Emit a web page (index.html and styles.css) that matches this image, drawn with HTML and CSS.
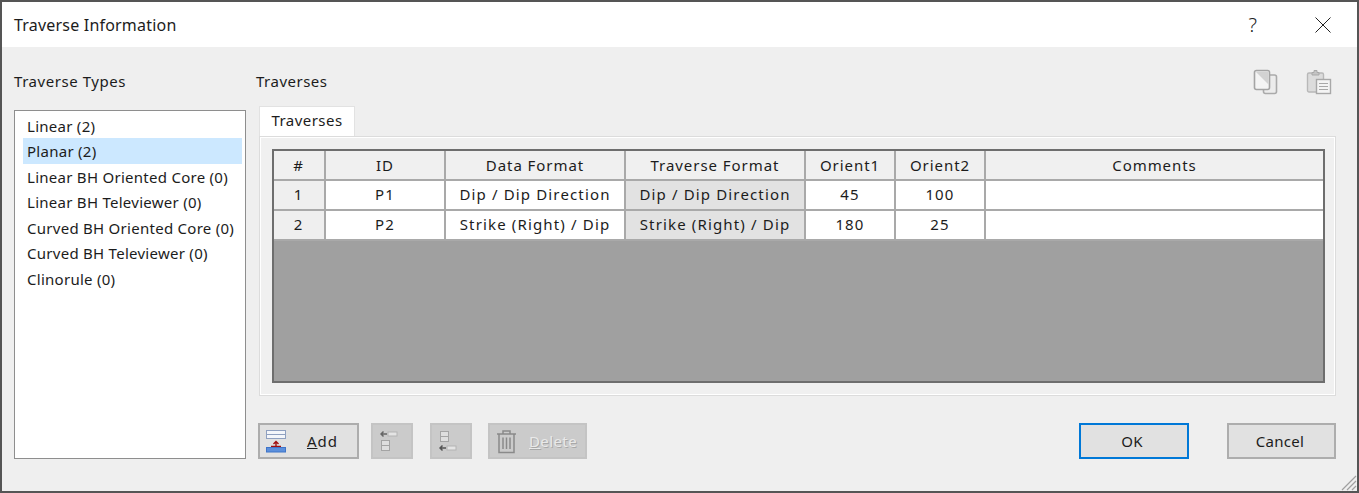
FILE: index.html
```html
<!DOCTYPE html>
<html lang="en">
<head>
<meta charset="utf-8">
<title>Traverse Information</title>
<link rel="stylesheet" href="styles.css">
</head>
<body>
<div class="window">
  <header class="titlebar">
    <span class="title">Traverse Information</span>
    <span class="help">?</span>
    <svg class="close" width="18" height="18" viewBox="0 0 18 18"><path d="M1.5 1.5 16.500 16.500M16.500 1.5 1.500 16.500" stroke="#222" stroke-width="1" fill="none"/></svg>
  </header>
  <main class="content">
    <section class="types">
      <h2 class="label types-label">Traverse Types</h2>
      <ul class="list">
        <li>Linear (2)</li>
        <li class="selected">Planar (2)</li>
        <li>Linear BH Oriented Core (0)</li>
        <li>Linear BH Televiewer (0)</li>
        <li>Curved BH Oriented Core (0)</li>
        <li>Curved BH Televiewer (0)</li>
        <li>Clinorule (0)</li>
      </ul>
    </section>
    <section class="traverses">
      <div class="head">
        <h2 class="label">Traverses</h2>
        <div class="tools">
          <svg width="25" height="26" viewBox="0 0 25 26" fill="none"><rect x="10.500" y="6" width="13" height="18.500" rx="2" fill="#ececec" stroke="#aaa" stroke-width="1.600"/><rect x="1.500" y="1.500" width="15" height="19" rx="2" fill="#f4f4f4" stroke="#a4a4a4" stroke-width="1.600"/><path d="M2.500 2.500H15.500V15.500Z" fill="#d2d2d2"/></svg>
          <svg width="26" height="26" viewBox="0 0 26 26" fill="none"><rect x="1.500" y="4" width="16" height="19" rx="1.500" fill="#dcdcdc" stroke="#b8b8b8" stroke-width="1.400"/><path d="M6 6V3.500H8V1.500H11V3.500H13V6Z" fill="#c4c4c4" stroke="#a8a8a8"/><rect x="10.500" y="10.500" width="14" height="14" fill="#f4f4f4" stroke="#a8a8a8" stroke-width="1.400"/><path d="M13 14.500H22M13 17.500H22M13 20.500H22" stroke="#a8a8a8" stroke-width="1.200"/></svg>
        </div>
      </div>
      <div class="tab">Traverses</div>
      <div class="pane">
        <table class="grid">
          <colgroup>
            <col class="c1"><col class="c2"><col class="c3"><col class="c4"><col class="c5"><col class="c6"><col class="c7">
          </colgroup>
          <thead>
            <tr><th>#</th><th>ID</th><th>Data Format</th><th>Traverse Format</th><th>Orient1</th><th>Orient2</th><th>Comments</th></tr>
          </thead>
          <tbody>
            <tr><td class="num">1</td><td>P1</td><td>Dip / Dip Direction</td><td class="ro">Dip / Dip Direction</td><td>45</td><td>100</td><td></td></tr>
            <tr><td class="num">2</td><td>P2</td><td>Strike (Right) / Dip</td><td class="ro">Strike (Right) / Dip</td><td>180</td><td>25</td><td></td></tr>
          </tbody>
        </table>
      </div>
      <div class="actions">
        <button class="btn add" type="button">
          <svg width="22" height="24" viewBox="0 0 22 24"><rect x="1.500" y="1.500" width="19" height="4" fill="#f4f6fa" stroke="#8fa0c0"/><rect x="1.500" y="5.500" width="19" height="4" fill="#f4f6fa" stroke="#8fa0c0"/><path d="M11 17V12.500M8.500 15 11 12.500 13.500 15M6 17.500H16" stroke="#a01010" stroke-width="1.400" fill="none"/><rect x="1.500" y="18.500" width="19" height="4.500" fill="#5b8fdc" stroke="#3f74c8"/></svg>
          <span class="btn-text"><u>A</u>dd</span>
        </button>
        <button class="btn off move" type="button">
          <svg class="move-icon" width="18" height="22" viewBox="0 0 18 22" fill="none"><path d="M7 4H1M3.500 1.500 1 4 3.500 6.500" stroke="#666" stroke-width="1.500"/><rect x="8" y="2" width="9" height="4" fill="#e4e4e4" stroke="#b4b4b4"/><rect x="1.500" y="10.500" width="8" height="5" fill="#dedede" stroke="#a4a4a4"/><rect x="1.500" y="15.500" width="8" height="5" fill="#dedede" stroke="#a4a4a4"/></svg>
        </button>
        <button class="btn off move" type="button">
          <svg class="move-icon" width="18" height="22" viewBox="0 0 18 22" fill="none"><rect x="1.500" y="1.500" width="8" height="5" fill="#dedede" stroke="#a4a4a4"/><rect x="1.500" y="6.500" width="8" height="5" fill="#dedede" stroke="#a4a4a4"/><path d="M7 18H1M3.500 15.500 1 18 3.500 20.500" stroke="#555" stroke-width="1.500"/><rect x="8" y="16" width="9" height="4" fill="#e4e4e4" stroke="#b4b4b4"/></svg>
        </button>
        <button class="btn off del" type="button">
          <svg width="21" height="25" viewBox="0 0 21 25" fill="none" stroke="#8a8a8a" stroke-width="1.500"><path d="M1 5H20M7 5V2H14V5M3 5V23.500H18V5M7 8.500V20M10.500 8.500V20M14 8.500V20"/></svg>
          <span class="btn-text"><u>D</u>elete</span>
        </button>
        <span class="spacer"></span>
        <button class="btn ok" type="button">OK</button>
        <button class="btn cancel" type="button">Cancel</button>
      </div>
    </section>
    <svg class="grip" width="18" height="18" viewBox="0 0 18 18" fill="none" stroke="#a0a0a0" stroke-width="1.200"><path d="M17 3 3 17M17 8 8 17M17 13 13 17"/></svg>
  </main>
</div>
</body>
</html>
```

FILE: styles.css
```css
* { box-sizing: border-box; }
html, body { margin: 0; height: 100%; }
body {
  font-family: "Noto Sans", "Open Sans", sans-serif;
  font-size: 15px;
  color: #1c1c1c;
  background: #efefef;
}
.window {
  height: 493px;
  border: 2px solid #555;
  display: flex;
  flex-direction: column;
  overflow: hidden;
}
.titlebar {
  height: 45px;
  background: #fff;
  display: flex;
  align-items: center;
  padding: 0 25px 0 12px;
  flex: none;
}
.title { flex: 1; font-size: 16px; letter-spacing: 0.2px; }
.help { font-size: 20px; margin-right: 57px; font-weight: 300; color: #222; }
.content {
  flex: 1;
  display: flex;
  gap: 12px;
  padding: 23px 21px 0 12px;
  background: #efefef;
  position: relative;
}
.types { width: 232px; flex: none; }
.label { margin: 0; font-size: 15px; font-weight: 400; line-height: 22px; letter-spacing: 0.55px; }
.traverses .label { margin-left: -2px; letter-spacing: 0.5px; }
.types-label { margin-bottom: 18px; }
.list {
  list-style: none;
  margin: 0;
  height: 349px;
  padding: 2px 3px 0 8px;
  background: #fff;
  border: 1px solid #8e8e8e;
}
.list li { height: 25.450px; line-height: 26px; padding-left: 4px; white-space: nowrap; letter-spacing: 0.27px; }
.list .selected { background: #cce8ff; }
.traverses { flex: 1; display: flex; flex-direction: column; min-width: 0; }
.head { display: flex; justify-content: space-between; height: 36px; padding-right: 4px; }
.tools { display: flex; gap: 28px; margin-top: -1px; height: 26px; }
.tab {
  width: 96px;
  height: 30px;
  margin-left: 1px;
  background: #fff;
  border: 1px solid #e2e2e2;
  border-bottom: 0;
  line-height: 26px;
  text-align: center;
  letter-spacing: 0.45px;
}
.pane {
  height: 260px;
  margin-left: 1px;
  padding: 12px 10px 12px 12px;
  background: #f0f0f0;
  border: 1px solid #dcdcdc;
  box-shadow: inset 0 0 0 1px #fff;
}
.grid {
  width: 1053px;
  height: 234px;
  table-layout: fixed;
  border-collapse: separate;
  border-spacing: 0;
  background: #a0a0a0;
  border: 2px solid #6e6e6e;
  display: block;
}
.grid thead, .grid tbody { display: table-row-group; }
.c1 { width: 52px; }
.c2 { width: 120px; }
.c3, .c4 { width: 180px; }
.c5, .c6 { width: 90px; }
.c7 { width: 337px; }
.grid th, .grid td {
  padding: 0;
  text-align: center;
  font-weight: 400;
  height: 30px;
  border-right: 2px solid #a9a9a9;
  border-bottom: 2px solid #a9a9a9;
  background: #fff;
  white-space: nowrap;
}
.grid th { background: #f0f0f0; letter-spacing: 0.95px; padding-bottom: 1px; }
.grid td { letter-spacing: 1.15px; padding-bottom: 3px; }
.grid .ro { background: #e2e2e2; }
.grid .num { background: #efefef; }
.grid th:first-child, .grid td:first-child { padding-right: 1px; }
.grid th:last-child, .grid td:last-child { border-right: 0; }
.actions { display: flex; align-items: center; margin-top: 27px; height: 36px; }
.btn {
  font: inherit;
  color: inherit;
  height: 36px;
  padding: 0;
  background: #e1e1e1;
  border: 2px solid #adadad;
  display: flex;
  align-items: center;
  justify-content: center;
  letter-spacing: 0.3px;
}
.add { width: 101px; justify-content: flex-start; padding-left: 5px; gap: 20px; margin-right: 12px; letter-spacing: 0.9px; }
.off { background: #cbcbcb; border-color: #c4c4c4; }
.off .btn-text { color: #e9e9e9; text-shadow: 1px 1px 0 #a8a8a8; letter-spacing: 0.4px; }
.move { width: 42px; margin-right: 17px; }
.move-icon { margin-right: 7px; }
.del { width: 99px; justify-content: flex-start; padding-left: 6px; gap: 12px; margin-left: -1px; }
.spacer { flex: 1; }
.ok { width: 110px; border-color: #0078d7; margin-right: 38px; padding-right: 4px; }
.cancel { width: 109px; padding-right: 3px; }
.grip { position: absolute; right: 0; bottom: 0; }
```
